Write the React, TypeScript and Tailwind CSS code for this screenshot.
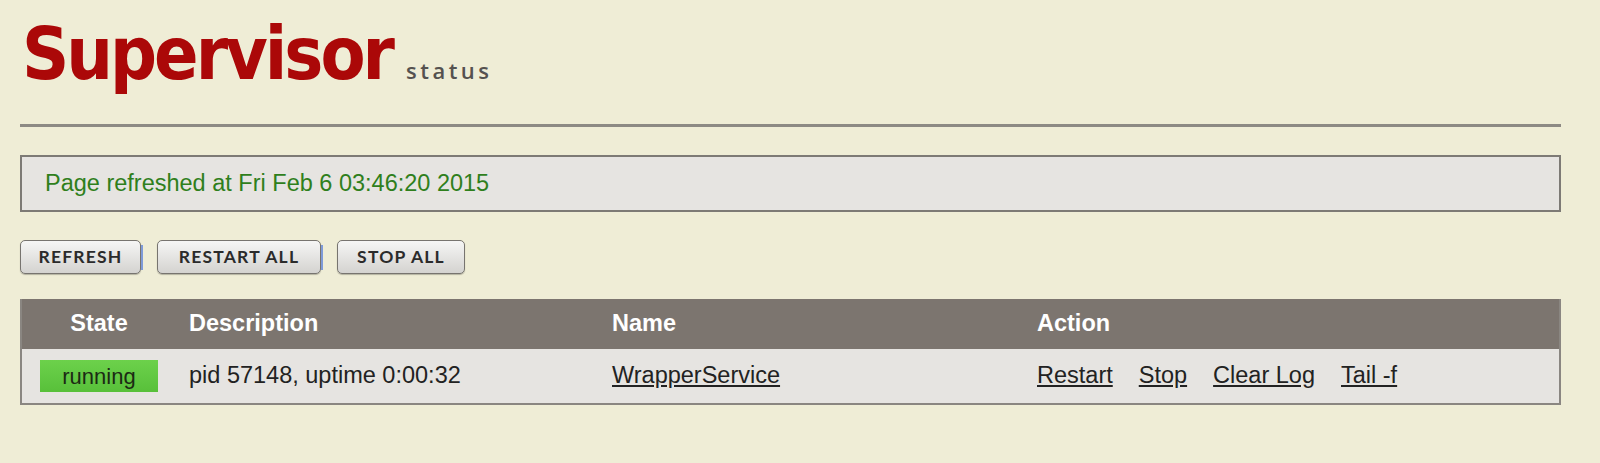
const buttons = [
  { label: "REFRESH", w: "w-[121px]", glow: true },
  { label: "RESTART ALL", w: "w-[164px]", glow: true },
  { label: "STOP ALL", w: "w-[128px]", glow: false },
];

const actions = ["Restart", "Stop", "Clear Log", "Tail -f"];

const App: React.FC = () => {
  return (
    <div className="min-h-screen bg-[#efedd6] pl-5 pr-[39px] pt-[8px] font-['Liberation_Sans',Arial,sans-serif] text-[23.5px] text-[#222]">
      {/* logo */}
      <div className="flex items-baseline h-[116px] pl-[2px]">
        <span className="font-['DejaVu_Sans_Condensed','DejaVu_Sans',sans-serif] font-stretch-condensed font-bold text-[73px] leading-[92px] tracking-[-3px] text-[#ab0808]">
          Supervisor
        </span>
        <span className="ml-[14px] font-['Open_Sans',sans-serif] font-semibold text-[22px] tracking-[3.5px] text-[#555250]">
          status
        </span>
      </div>

      <div className="border-t-[3px] border-[#8d8a84] h-[2px] bg-[#d6d4c2]" />

      {/* refresh message */}
      <div className="mt-[28px] h-[57px] flex items-center border-2 border-[#7d7a75] bg-[#e6e4e1] pl-[23px] text-[#2f7f1c]">
        Page refreshed at Fri Feb 6 03:46:20 2015
      </div>

      {/* buttons */}
      <div className="mt-[28px] flex gap-4">
        {buttons.map((b) => (
          <button
            key={b.label}
            className={`relative ${b.w} h-[34px] rounded-[5px] border border-[#77746f] bg-gradient-to-b from-[#f6f6f5] to-[#d4d3d0] shadow-[0_1px_1px_rgba(0,0,0,0.25)] font-['Lato',sans-serif] font-bold text-[17.5px] tracking-[1.2px] text-[#2b2b2b]`}
          >
            {b.label}
            {b.glow && (
              <span className="absolute right-[-3px] top-[4px] h-[25px] w-[2px] bg-[#7f9bd8]" />
            )}
          </button>
        ))}
      </div>

      {/* process table */}
      <div className="mt-[25px] border-2 border-t-0 border-[#8a8681]">
        <div className="grid grid-cols-[154px_423px_425px_1fr] h-[50px] items-center bg-[#7c756f] font-bold text-white">
          <div className="text-center">State</div>
          <div className="pl-[13px]">Description</div>
          <div className="pl-[13px]">Name</div>
          <div className="pl-[13px]">Action</div>
        </div>
        <div className="grid grid-cols-[154px_423px_425px_1fr] h-[54px] items-center bg-[#e6e4e1]">
          <div className="flex justify-center">
            <span className="w-[118px] h-[32px] flex items-center justify-center bg-gradient-to-b from-[#6cd14b] to-[#58c03a] text-[22px] text-[#1c2a14]">
              running
            </span>
          </div>
          <div className="pl-[13px]">pid 57148, uptime 0:00:32</div>
          <div className="pl-[13px]">
            <a href="#" className="underline">WrapperService</a>
          </div>
          <div className="pl-[13px] flex gap-[26px]">
            {actions.map((a) => (
              <a key={a} href="#" className="underline">
                {a}
              </a>
            ))}
          </div>
        </div>
      </div>
    </div>
  );
};

export default App;
